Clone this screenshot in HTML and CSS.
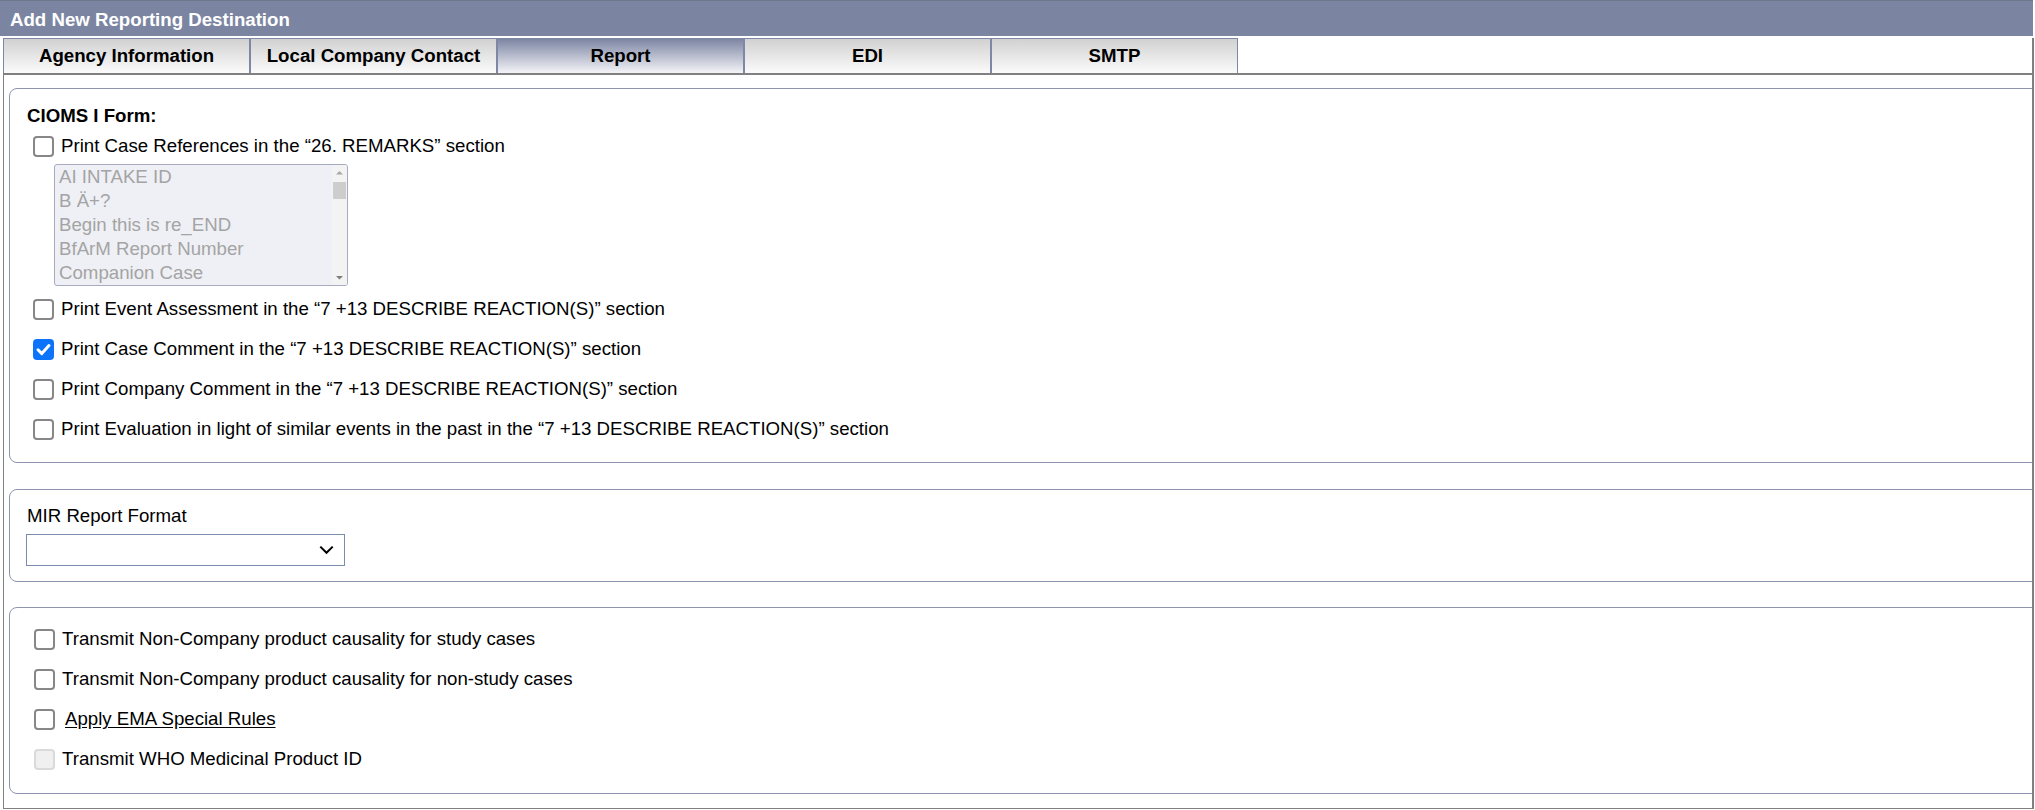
FILE: index.html
```html
<!DOCTYPE html>
<html lang="en">
<head>
<meta charset="utf-8">
<title>Add New Reporting Destination</title>
<link rel="stylesheet" href="styles.css">
</head>
<body>
<div class="title-bar">Add New Reporting Destination</div>
<div class="dialog">
  <div class="tabs">
    <div class="tab first">Agency Information</div>
    <div class="tab">Local Company Contact</div>
    <div class="tab active">Report</div>
    <div class="tab">EDI</div>
    <div class="tab">SMTP</div>
  </div>
  <div class="tab-body">
    <div class="panel panel-cioms">
      <div class="section-title">CIOMS I Form:</div>
      <label class="row row-first"><span class="cb"></span><span>Print Case References in the “26. REMARKS” section</span></label>
      <div class="listbox">
        <div class="items">
          <div>AI INTAKE ID</div>
          <div>B Ä+?</div>
          <div>Begin this is re_END</div>
          <div>BfArM Report Number</div>
          <div>Companion Case</div>
        </div>
        <div class="scrollbar">
          <svg class="sb-btn" width="15" height="15" viewBox="0 0 15 15"><path d="M4 9.5 L7.5 6 L11 9.5 Z" fill="#a8a8a8"/></svg>
          <div class="sb-thumb"></div>
          <div class="sb-track"></div>
          <svg class="sb-btn" width="15" height="15" viewBox="0 0 15 15"><path d="M4 6 L11 6 L7.5 9.5 Z" fill="#7e7e7e"/></svg>
        </div>
      </div>
      <label class="row row-after-list"><span class="cb"></span><span>Print Event Assessment in the “7 +13 DESCRIBE REACTION(S)” section</span></label>
      <label class="row"><span class="cb checked"><svg width="21" height="21" viewBox="0 0 21 21"><path d="M5 10.8 L8.8 14.6 L16 6.6" fill="none" stroke="#fff" stroke-width="3" stroke-linecap="round" stroke-linejoin="round"/></svg></span><span>Print Case Comment in the “7 +13 DESCRIBE REACTION(S)” section</span></label>
      <label class="row"><span class="cb"></span><span>Print Company Comment in the “7 +13 DESCRIBE REACTION(S)” section</span></label>
      <label class="row"><span class="cb"></span><span>Print Evaluation in light of similar events in the past in the “7 +13 DESCRIBE REACTION(S)” section</span></label>
    </div>

    <div class="panel panel-mir">
      <div class="field-label">MIR Report Format</div>
      <div class="select">
        <svg width="15" height="10" viewBox="0 0 15 10"><path d="M1.3 1.6 L7.5 7.8 L13.7 1.6" fill="none" stroke="#000" stroke-width="2"/></svg>
      </div>
    </div>

    <div class="panel panel-transmit">
      <label class="row row-first"><span class="cb"></span><span>Transmit Non-Company product causality for study cases</span></label>
      <label class="row"><span class="cb"></span><span>Transmit Non-Company product causality for non-study cases</span></label>
      <label class="row"><span class="cb"></span><a class="link">Apply EMA Special Rules</a></label>
      <label class="row"><span class="cb disabled"></span><span>Transmit WHO Medicinal Product ID</span></label>
    </div>
  </div>
</div>
</body>
</html>
```

FILE: styles.css
```css
* {
  box-sizing: border-box;
}

html, body {
  margin: 0;
  padding: 0;
}

body {
  width: 2035px;
  height: 810px;
  overflow: hidden;
  background: #ffffff;
  color: #000000;
  font-family: "Liberation Sans", Arial, sans-serif;
  font-size: 18.67px;
}

.title-bar {
  height: 36px;
  margin-right: 2px;
  padding: 3px 0 0 10px;
  background: #7b85a2;
  border-top: 1px solid #70768a;
  color: #ffffff;
  font-weight: bold;
  line-height: 31px;
  white-space: nowrap;
}

.dialog {
  height: 771px;
  margin: 2px 1px 0 3px;
  border-left: 1px solid #808080;
  border-right: 2px solid #808080;
  border-bottom: 1px solid #808080;
  display: flex;
  flex-direction: column;
}

.tabs {
  display: flex;
  height: 35px;
  flex: none;
}

.tab {
  width: 247px;
  display: flex;
  align-items: center;
  justify-content: center;
  border: 1px solid #7e87a6;
  border-bottom: 0;
  background: linear-gradient(#d1d1d1, #fbfbfb);
  font-weight: bold;
  white-space: nowrap;
}

.tab.first {
  margin-left: -1px;
}

.tab.active {
  background: linear-gradient(#7c85a3, #f4f4f8);
}

.tab-body {
  flex: 1;
  border-top: 2px solid #808080;
  padding: 13px 0 0 5px;
  overflow: hidden;
}

.panel {
  border: 1px solid #8d94ad;
  border-radius: 8px;
  margin-right: -10px;
  padding-left: 17px;
}

.panel-cioms {
  padding-top: 16px;
  padding-bottom: 21px;
}

.panel-mir {
  margin-top: 26px;
  padding-top: 15px;
  padding-bottom: 15px;
}

.panel-transmit {
  margin-top: 25px;
  padding-top: 19px;
  padding-bottom: 22px;
}

.section-title {
  font-weight: bold;
  line-height: 21px;
}

.row {
  display: flex;
  align-items: center;
  height: 24px;
  margin-top: 16px;
  padding-left: 6px;
  white-space: nowrap;
}

.row.row-first {
  margin-top: 8px;
}

.panel-transmit .row {
  padding-left: 7px;
}

.panel-transmit .row.row-first {
  margin-top: 0;
}

.row.row-after-list {
  margin-top: 11px;
}

.cb {
  flex: none;
  width: 21px;
  height: 21px;
  margin-right: 7px;
  border: 2px solid #878787;
  border-radius: 4px;
  background: #ffffff;
  display: flex;
}

.cb.checked {
  border: 0;
  background: #0b74fb;
}

.cb.disabled {
  border-color: #dadada;
  background: #f0f0f0;
}

.link {
  margin-left: 3px;
  color: #000000;
  text-decoration: underline;
  text-underline-offset: 2px;
}

.listbox {
  display: flex;
  width: 294px;
  height: 122px;
  margin: 6px 0 0 27px;
  border: 1px solid #a6abc0;
  border-radius: 3px;
  background: #eff0f5;
  overflow: hidden;
}

.items {
  flex: 1;
  padding-left: 4px;
  color: #a4a4a4;
  line-height: 24px;
  white-space: nowrap;
  overflow: hidden;
}

.scrollbar {
  width: 15px;
  flex: none;
  display: flex;
  flex-direction: column;
  background: #f3f3f4;
}

.sb-btn {
  display: block;
  flex: none;
}

.sb-thumb {
  height: 17px;
  margin: 2px 1px 0 1px;
  background: #cdcdcd;
  flex: none;
}

.sb-track {
  flex: 1;
}

.field-label {
  line-height: 21px;
}

.select {
  width: 319px;
  height: 32px;
  margin: 8px 0 0 -1px;
  border: 1px solid #7a8db0;
  background: #ffffff;
  display: flex;
  align-items: center;
  justify-content: flex-end;
  padding-right: 10px;
}

.select svg {
  display: block;
}
```
